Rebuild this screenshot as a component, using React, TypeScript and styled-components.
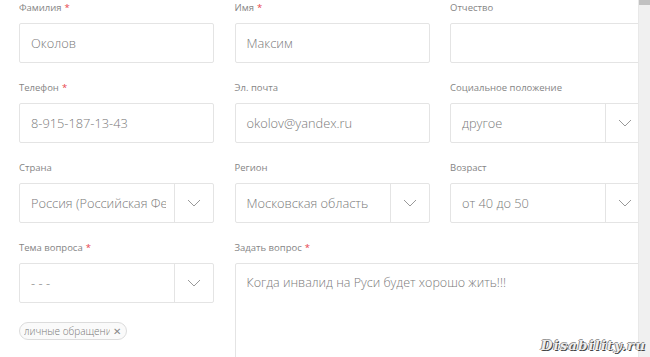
import React from "react";
import styled, { createGlobalStyle } from "styled-components";

const Global = createGlobalStyle`
  html, body { margin: 0; padding: 0; background: #fff; overflow: hidden; }
  body { font-family: "Open Sans", "Liberation Sans", sans-serif; }
`;

const Page = styled.div`
  display: flex;
  width: 650px;
  height: 357px;
  overflow: hidden;
  position: relative;
`;

const Content = styled.div`
  flex: 1;
  overflow: hidden;
  padding: 1px 0 0 19px;
`;

const Scrollbar = styled.div`
  width: 11px;
  flex: none;
  background: #f0f0f0;
  border-left: 1px solid #e8e8e8;
  display: flex;
  flex-direction: column;
`;

const Thumb = styled.div`
  height: 5px;
  background: #c1c1c1;
`;

const Grid = styled.div`
  display: grid;
  grid-template-columns: 195px 195px 195px;
  column-gap: 20.5px;
  row-gap: 18px;
  width: 640px;
`;

const Field = styled.div<{ $span?: number }>`
  display: flex;
  flex-direction: column;
  min-width: 0;
  grid-column: span ${(p) => p.$span ?? 1};
`;

const Label = styled.div`
  font-size: 9.5px;
  line-height: 14px;
  color: #858585;
  margin-bottom: 8px;
  white-space: nowrap;
`;

const Req = styled.span`
  color: #e8434b;
  margin-left: 3px;
`;

const Box = styled.div`
  height: 40px;
  box-sizing: border-box;
  border: 1px solid #e4e4e4;
  border-radius: 2px;
  display: flex;
  align-items: center;
  background: #fff;
`;

const Value = styled.div`
  flex: 1;
  min-width: 0;
  padding-left: 11px;
  margin-right: 8px;
  font-size: 12.8px;
  font-weight: 300;
  color: #7a7a7a;
  white-space: nowrap;
  overflow: hidden;
`;

const Arrow = styled.div`
  width: 38px;
  align-self: stretch;
  border-left: 1px solid #e4e4e4;
  display: flex;
  align-items: center;
  justify-content: center;
  flex: none;
`;

const TextArea = styled.div`
  height: 130px;
  box-sizing: border-box;
  border: 1px solid #e4e4e4;
  border-radius: 2px;
  padding: 10px 11px;
  font-size: 12.5px;
  font-weight: 300;
  color: #7a7a7a;
`;

const Chip = styled.div`
  align-self: flex-start;
  margin-top: 19px;
  display: inline-flex;
  align-items: center;
  height: 18px;
  box-sizing: border-box;
  border: 1px solid #dcdcdc;
  border-radius: 9px;
  padding: 0 5px 0 4px;
  font-size: 10px;
  color: #777;
  background: #fafafa;
  gap: 3px;
`;

const ChipText = styled.span`
  width: 86px;
  overflow: hidden;
  white-space: nowrap;
  font-weight: 300;
`;

const ChipX = styled.span`
  font-size: 10px;
  color: #888;
`;

const FileLabel = styled.div`
  margin-top: 14px;
  font-size: 11px;
  color: #555;
  white-space: nowrap;
`;

const Watermark = styled.div`
  position: absolute;
  right: 4px;
  bottom: 4px;
  font-family: "DejaVu Serif", "Liberation Serif", serif;
  font-style: italic;
  font-weight: bold;
  font-size: 13.5px;
  letter-spacing: 1px;
  color: #eeeeee;
  text-shadow: 1px 1px 0 #444, -1px 0 0 #888, 0 -1px 0 #999;
`;

const Chevron = () => (
  <svg width="14" height="8" viewBox="0 0 14 8">
    <path d="M1 1 L7 7 L13 1" fill="none" stroke="#999" strokeWidth="1" />
  </svg>
);

const Input: React.FC<{ label: string; req?: boolean; value?: string }> = ({ label, req, value }) => (
  <Field>
    <Label>
      {label}
      {req && <Req>*</Req>}
    </Label>
    <Box>
      <Value>{value}</Value>
    </Box>
  </Field>
);

const Select: React.FC<{ label: string; req?: boolean; value?: string; children?: React.ReactNode }> = ({
  label,
  req,
  value,
  children,
}) => (
  <Field>
    <Label>
      {label}
      {req && <Req>*</Req>}
    </Label>
    <Box>
      <Value>{value}</Value>
      <Arrow>
        <Chevron />
      </Arrow>
    </Box>
    {children}
  </Field>
);

export default function App() {
  return (
    <>
      <Global />
      <Page>
        <Content>
          <Grid>
            <Input label="Фамилия" req value="Околов" />
            <Input label="Имя" req value="Максим" />
            <Input label="Отчество" value="" />
            <Input label="Телефон" req value="8-915-187-13-43" />
            <Input label="Эл. почта" value="okolov@yandex.ru" />
            <Select label="Социальное положение" value="другое" />
            <Select label="Страна" value="Россия (Российская Федерация)" />
            <Select label="Регион" value="Московская область" />
            <Select label="Возраст" value="от 40 до 50" />
            <Select label="Тема вопроса" req value="- - -">
              <Chip>
                <ChipText>личные обращения</ChipText>
                <ChipX>✕</ChipX>
              </Chip>
              <FileLabel>Добавить файл</FileLabel>
            </Select>
            <Field $span={2}>
              <Label>
                Задать вопрос<Req>*</Req>
              </Label>
              <TextArea>Когда инвалид на Руси будет хорошо жить!!!</TextArea>
            </Field>
          </Grid>
        </Content>
        <Scrollbar>
          <Thumb />
        </Scrollbar>
        <Watermark>Disability.ru</Watermark>
      </Page>
    </>
  );
}
